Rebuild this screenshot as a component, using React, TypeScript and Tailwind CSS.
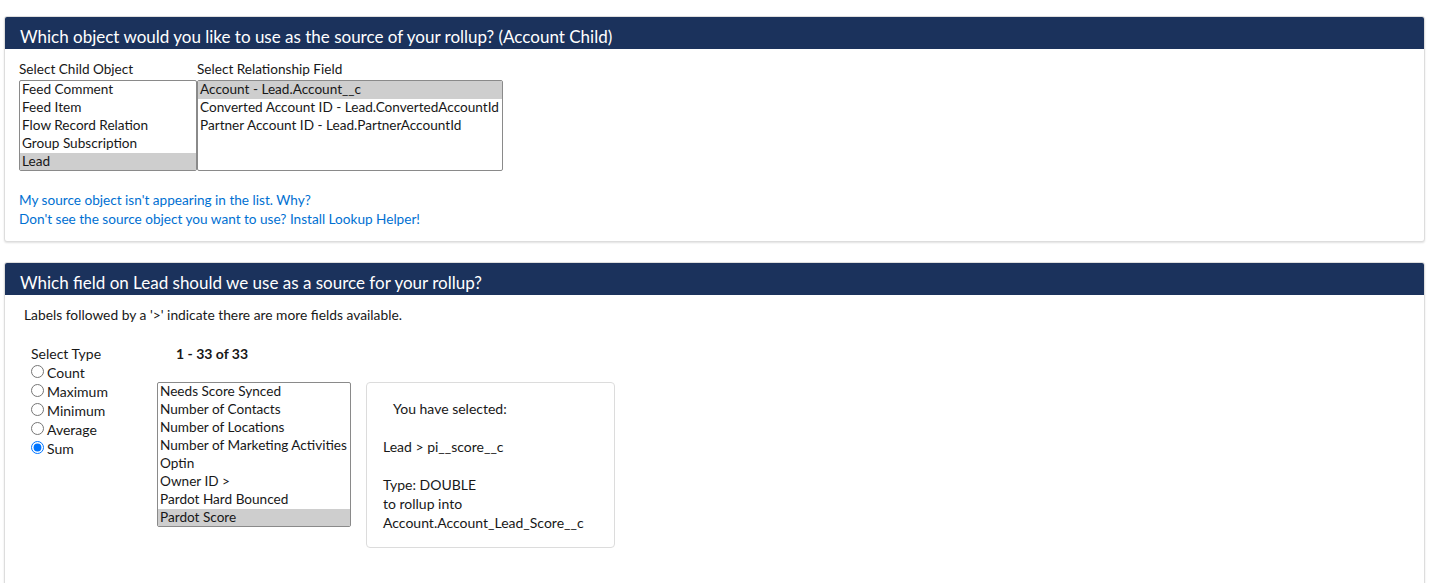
import React from "react";

const childObjects = ["Feed Comment", "Feed Item", "Flow Record Relation", "Group Subscription", "Lead"];
const relFields = [
  "Account - Lead.Account__c",
  "Converted Account ID - Lead.ConvertedAccountId",
  "Partner Account ID - Lead.PartnerAccountId",
];
const leadFields = [
  "Needs Score Synced",
  "Number of Contacts",
  "Number of Locations",
  "Number of Marketing Activities",
  "Optin",
  "Owner ID >",
  "Pardot Hard Bounced",
  "Pardot Score",
];
const types = ["Count", "Maximum", "Minimum", "Average", "Sum"];

const ListBox = ({ items, selected, className }: { items: string[]; selected: string; className: string }) => (
  <div className={`border border-[#8a8a8a] rounded-[2px] overflow-hidden bg-white ${className}`}>
    {items.map((it) => (
      <div key={it} className={`h-[18px] leading-[17px] px-[2px] whitespace-nowrap ${it === selected ? "bg-[#cecece]" : ""}`}>
        {it}
      </div>
    ))}
  </div>
);

const Card = ({ title, children, className = "" }: { title: string; children: React.ReactNode; className?: string }) => (
  <section className={`mx-[4px] w-[1421px] border border-[#dddddd] rounded-[3px] shadow-[0_1px_2px_rgba(0,0,0,0.12)] bg-white overflow-hidden ${className}`}>
    <div className="h-[32px] bg-[#1b325c] text-white text-[17px] px-[15px] pt-[9px] leading-[22px]">{title}</div>
    {children}
  </section>
);

export default function App() {
  return (
    <div className="bg-white text-[#181818] text-[13.6px] pt-[16px] font-['Lato',sans-serif] overflow-hidden h-[583px]">
      <Card title="Which object would you like to use as the source of your rollup? (Account Child)">
        <div className="px-[14px] pt-[11px] pb-[12px]">
          <div className="flex">
            <div className="w-[178px]">
              <div className="leading-[18px] mb-[2px]">Select Child Object</div>
              <ListBox items={childObjects} selected="Lead" className="w-[178px] h-[91px]" />
            </div>
            <div>
              <div className="leading-[18px] mb-[2px]">Select Relationship Field</div>
              <ListBox items={relFields} selected={relFields[0]} className="w-[306px] h-[91px]" />
            </div>
          </div>
          <div className="mt-[20px] text-[#0070d2] leading-[19px]">
            <div>My source object isn't appearing in the list. Why?</div>
            <div>Don't see the source object you want to use? Install Lookup Helper!</div>
          </div>
        </div>
      </Card>

      <Card title="Which field on Lead should we use as a source for your rollup?" className="mt-[20px] h-[340px]">
        <div className="pl-[19px] pt-[11px] text-[13.8px] leading-[18px]">Labels followed by a '&gt;' indicate there are more fields available.</div>
        <div className="flex pl-[26px] pt-[20px]">
          <div className="w-[126px] text-[14px]">
            <div className="leading-[19px]">Select Type</div>
            {types.map((t) => (
              <label key={t} className="flex items-center h-[19px]">
                <input type="radio" name="type" defaultChecked={t === "Sum"} className="m-0 -mt-[2px] w-[13px] h-[13px] accent-[#0075ff]" />
                <span className="ml-[3px]">{t}</span>
              </label>
            ))}
          </div>
          <div>
            <div className="leading-[19px] font-bold pl-[19px] text-[14px]">1 - 33 of 33</div>
            <div className="flex items-start mt-[10px]">
              <ListBox items={leadFields} selected="Pardot Score" className="w-[194px] h-[145px] mt-[9px]" />
              <div className="ml-[15px] mt-[9px] w-[249px] h-[166px] border border-[#dcdcdc] rounded-[4px] pl-[16px] pt-[16px] leading-[19px] text-[14px]">
                <div className="pl-[10px]">You have selected:</div>
                <div className="mt-[19px]">Lead &gt; pi__score__c</div>
                <div className="mt-[19px]">Type: DOUBLE</div>
                <div>to rollup into</div>
                <div>Account.Account_Lead_Score__c</div>
              </div>
            </div>
          </div>
        </div>
      </Card>
    </div>
  );
}
